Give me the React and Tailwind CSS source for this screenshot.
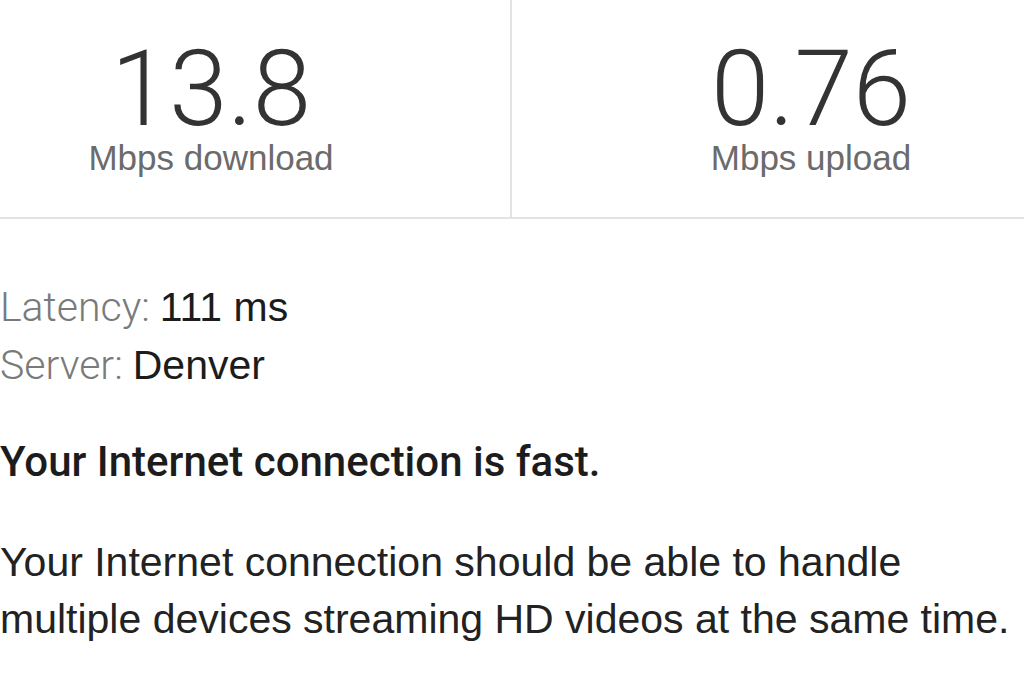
export default function App() {
  const sans = { fontFamily: '"Liberation Sans", Arial, sans-serif' }
  const light = { fontFamily: 'Roboto, "Liberation Sans", sans-serif' }

  return (
    <div className="w-[1024px] h-[683px] overflow-hidden bg-white" style={sans}>
      {/* page is wider than the visible crop */}
      <div className="w-[1198px] -ml-[88px]">
        {/* Speed results */}
        <div className="grid grid-cols-[600px_1fr] border-b-2 border-[#e3e3e3]">
          <div className="h-[217px] pt-[42px] flex flex-col items-center border-r-2 border-[#e3e3e3]">
            <div className="text-[105px] leading-[96px] text-[#333] font-light" style={light}>
              13.8
            </div>
            <div className="text-[35px] leading-[40px] text-[#6b6b6b]">Mbps download</div>
          </div>
          <div className="h-[217px] pt-[42px] flex flex-col items-center">
            <div className="text-[105px] leading-[96px] text-[#333] font-light" style={light}>
              0.76
            </div>
            <div className="text-[35px] leading-[40px] text-[#6b6b6b]">Mbps upload</div>
          </div>
        </div>

        {/* Details */}
        <div className="px-[88px] pt-[59px]">
          <div className="text-[41px] leading-[58px]">
            <div>
              <span className="text-[#7a7a7a] font-light" style={light}>Latency: </span>
              <span className="text-[#1c1c1c]">111 ms</span>
            </div>
            <div>
              <span className="text-[#7a7a7a] font-light" style={light}>Server: </span>
              <span className="text-[#1c1c1c]">Denver</span>
            </div>
          </div>

          <h2 className="mt-[40px] text-[42px] leading-[56px] font-medium text-[#1c1c1c]" style={light}>
            Your Internet connection is fast.
          </h2>

          <p className="mt-[44px] text-[41px] leading-[57px] text-[#222]">
            Your Internet connection should be able to handle multiple devices streaming HD videos at the same time.
          </p>
        </div>
      </div>
    </div>
  )
}
